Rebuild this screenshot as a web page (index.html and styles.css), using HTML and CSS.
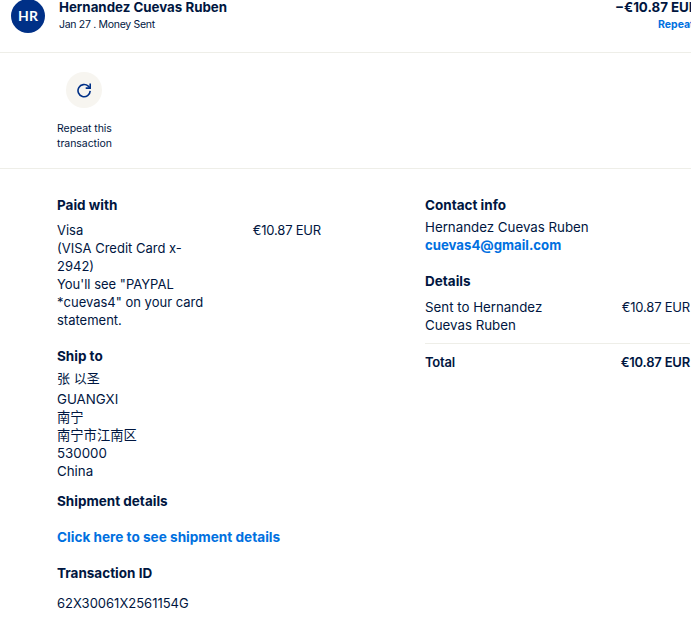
FILE: index.html
```html
<!DOCTYPE html>
<html>
<head>
  <meta charset="utf-8">
  <meta name="viewport" content="width=device-width, initial-scale=1">
  <title>Transaction details</title>
  <link rel="stylesheet" href="styles.css">
</head>
<body>
  <div class="page">
    <header class="summary">
      <div class="avatar">HR</div>
      <div class="summary-text">
        <div class="summary-name">Hernandez Cuevas Ruben</div>
        <div class="summary-sub">Jan 27 . Money Sent</div>
      </div>
      <div class="summary-right">
        <div class="summary-amount">−€10.87 EUR</div>
        <a class="summary-link" href="#">Repeat</a>
      </div>
    </header>

    <section class="actions">
      <a class="action" href="#">
        <span class="action-icon">
          <svg width="16" height="16" viewBox="0 0 16 16" fill="none">
            <path d="M14.2 8.9a6.1 6.1 0 1 1-1.9-4.7l1.6 1.6" stroke="#003087" stroke-width="1.6" fill="none"/>
            <path d="M14.2 1.6v4.5H9.7" stroke="#003087" stroke-width="1.6" fill="none"/>
          </svg>
        </span>
        <span class="action-label">Repeat this transaction</span>
      </a>
    </section>

    <main class="details">
      <div class="col col-left">
        <h3 class="title">Paid with</h3>
        <div class="row paid-row">
          <div class="paid-text">Visa<br>(VISA Credit Card x-2942)<br>You'll see "PAYPAL *cuevas4" on your card statement.</div>
          <div class="amount">€10.87 EUR</div>
        </div>

        <h3 class="title ship-title">Ship to</h3>
        <div class="ship-name">张 以圣</div>
        <div class="address">GUANGXI<br>南宁<br>南宁市江南区<br>530000<br>China</div>

        <h3 class="title shipment-title">Shipment details</h3>
        <a class="link shipment-link" href="#">Click here to see shipment details</a>

        <h3 class="title txn-title">Transaction ID</h3>
        <div class="txn-id">62X30061X2561154G</div>
      </div>

      <div class="col col-right">
        <h3 class="title">Contact info</h3>
        <div class="contact">Hernandez Cuevas Ruben<br><a class="link contact-mail" href="#">cuevas4@gmail.com</a></div>

        <h3 class="title details-title">Details</h3>
        <div class="row sent-row">
          <div class="sent-text">Sent to Hernandez Cuevas Ruben</div>
          <div class="amount">€10.87 EUR</div>
        </div>
        <div class="row total-row">
          <div>Total</div>
          <div class="amount">€10.87 EUR</div>
        </div>
      </div>
    </main>
  </div>
</body>
</html>
```

FILE: styles.css
```css
html, body {
  margin: 0;
  padding: 0;
  overflow: hidden;
  background-color: #fff;
}

body {
  font-family: Inter, "Noto Sans CJK SC", sans-serif;
  font-size: 13px;
  line-height: 18px;
  color: #00163f;
}

a {
  text-decoration: none;
}

.page {
  width: 691px;
}

.summary {
  display: flex;
  height: 54px;
  margin-top: -1px;
  padding-left: 11px;
  box-sizing: border-box;
  border-bottom: 1px solid #eeeee8;
}

.avatar {
  width: 34px;
  height: 34px;
  border-radius: 50%;
  background-color: #003087;
  color: #fff;
  font-family: Lato, sans-serif;
  font-weight: 700;
  font-size: 14px;
  line-height: 34px;
  text-align: center;
}

.summary-text {
  margin-left: 14px;
  flex: 1;
}

.summary-name {
  font-size: 13.3px;
  font-weight: 700;
  line-height: 17px;
}

.summary-sub {
  margin-top: 2px;
  font-size: 10.5px;
  letter-spacing: -0.3px;
  line-height: 14px;
}

.summary-right {
  width: 76px;
  white-space: nowrap;
}

.summary-amount {
  font-size: 13.3px;
  font-weight: 700;
  line-height: 17px;
}

.summary-link {
  display: block;
  margin-top: 2px;
  margin-left: 43px;
  font-size: 10.5px;
  font-weight: 700;
  line-height: 14px;
  color: #0070e0;
}

.actions {
  height: 116px;
  padding: 19px 0 0 57px;
  box-sizing: border-box;
  border-bottom: 1px solid #eeeee8;
}

.action {
  display: flex;
  flex-direction: column;
  width: 60px;
  color: #00163f;
}

.action-icon {
  display: flex;
  align-items: center;
  justify-content: center;
  width: 36px;
  height: 36px;
  margin-left: 9px;
  border-radius: 50%;
  background-color: #f7f5f0;
}

.action-label {
  margin-top: 13px;
  font-size: 10.5px;
  letter-spacing: -0.05px;
  line-height: 15px;
}

.details {
  display: flex;
  padding: 27px 0 0 57px;
}

.col-left {
  width: 264px;
  margin-right: 104px;
}

.col-right {
  width: 265px;
}

.title {
  margin: 0;
  font-size: 13.5px;
  font-weight: 700;
  line-height: 18px;
}

.row {
  display: flex;
  justify-content: space-between;
}

.amount {
  letter-spacing: -0.2px;
}

.paid-row {
  margin-top: 7px;
}

.paid-text {
  width: 150px;
}

.ship-title {
  margin-top: 18px;
}

.ship-name {
  margin-top: 4px;
}

.address {
  margin-top: 3px;
  font-size: 13.3px;
}

.shipment-title {
  margin-top: 12px;
}

.link {
  font-size: 13.6px;
  font-weight: 700;
  color: #0070e0;
}

.shipment-link {
  display: block;
  margin-top: 18px;
}

.txn-title {
  margin-top: 18px;
}

.txn-id {
  margin-top: 12px;
}

.contact {
  margin-top: 4px;
  font-size: 13.3px;
}

.contact-mail {
  font-size: 13.2px;
}

.details-title {
  margin-top: 18px;
}

.sent-row {
  margin-top: 8px;
  padding-bottom: 9px;
  border-bottom: 1px solid #eeeee8;
}

.sent-text {
  width: 140px;
  font-size: 13.3px;
}

.total-row {
  margin-top: 9px;
  font-weight: 600;
  letter-spacing: -0.2px;
}
```
